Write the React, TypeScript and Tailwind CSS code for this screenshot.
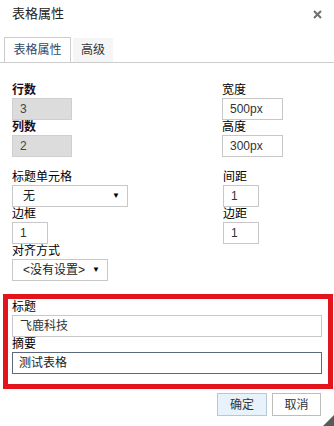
import React from 'react';

const font = { fontFamily: '"Liberation Sans", "Noto Sans CJK SC", sans-serif' };

function Label({ text, bold }: { text: string; bold?: boolean }) {
  return (
    <div className={`h-[15px] leading-[15px] text-[12px] ${bold ? 'font-bold text-[#1c0d24]' : 'text-black'}`}>
      {text}
    </div>
  );
}

function Box({ value, w, gray }: { value: string; w: string; gray?: boolean }) {
  return (
    <div
      className={`${w} h-[22px] border pl-[7px] flex items-center text-[12px] ${
        gray ? 'bg-[#dcdcdc] border-[#cfcfcf] text-[#444]' : 'bg-white border-[#c8c8c8] text-[#333]'
      }`}
    >
      {value}
    </div>
  );
}

function Select({ value, w }: { value: string; w: string }) {
  return (
    <div className={`${w} h-[22px] border border-[#c8c8c8] bg-white flex items-center justify-between pl-[10px] pr-[7px] text-[12px] text-[#222]`}>
      <span>{value}</span>
      <span className="text-[8px] text-black">▼</span>
    </div>
  );
}

export default function App() {
  return (
    <div className="relative w-[334px] h-[426px] bg-white overflow-hidden text-black" style={font}>
      {/* title bar */}
      <div className="h-[37px] flex items-start justify-between pl-3 pr-[12px] pt-[6px]">
        <span className="text-[13px] leading-[16px] text-[#222]">表格属性</span>
        <svg width="9" height="9" viewBox="0 0 9 9" className="mt-[4px]">
          <path d="M1 1 L8 8 M8 1 L1 8" stroke="#6f6f6f" strokeWidth="2" />
        </svg>
      </div>

      {/* tabs */}
      <div className="h-[26px] flex items-end border-b border-[#cccccc] pl-1">
        <div className="w-[67px] h-[25px] border border-b-0 border-[#cccccc] bg-white flex items-center justify-center text-[12px] text-[#2d4a68]">
          表格属性
        </div>
        <div className="ml-[2px] w-[40px] h-[24px] bg-[#f5f5f5] flex items-center justify-center text-[12px] text-[#333]">
          高级
        </div>
      </div>

      {/* general fields */}
      <div className="pt-5 pl-3">
        <div className="grid grid-cols-[210px_1fr]">
          <div>
            <Label text="行数" bold />
            <Box value="3" w="w-[60px]" gray />
            <Label text="列数" bold />
            <Box value="2" w="w-[60px]" gray />
          </div>
          <div>
            <Label text="宽度" />
            <Box value="500px" w="w-[61px]" />
            <Label text="高度" />
            <Box value="300px" w="w-[61px]" />
          </div>
        </div>

        <div className="mt-[13px] grid grid-cols-[211px_1fr]">
          <div>
            <Label text="标题单元格" />
            <Select value="无" w="w-[116px]" />
            <Label text="边框" />
            <Box value="1" w="w-[36px]" />
            <Label text="对齐方式" />
            <Select value="<没有设置>" w="w-[96px]" />
          </div>
          <div>
            <Label text="间距" />
            <Box value="1" w="w-[36px]" />
            <Label text="边距" />
            <Box value="1" w="w-[36px]" />
          </div>
        </div>
      </div>

      {/* highlighted caption / summary */}
      <div className="mt-[13px] ml-[3px] w-[330px] border-[5px] border-[#e2141c] pl-1 pt-[1px] pb-[10px]">
        <Label text="标题" />
        <Box value="飞鹿科技" w="w-[310px]" />
        <Label text="摘要" />
        <div className="w-[310px] h-[22px] border border-[#5b6b7c] pl-[6px] flex items-center text-[12px] text-[#222]">
          测试表格
        </div>
      </div>

      {/* buttons */}
      <div className="mt-[4px] flex justify-end gap-[5px] pr-[13px]">
        <button className="w-[50px] h-[23px] border border-[#b4c8d8] bg-[#e8f2fa] text-[12px] text-[#333]">确定</button>
        <button className="w-[49px] h-[23px] border border-[#bdbdbd] bg-white text-[12px] text-[#333]">取消</button>
      </div>

      {/* resize grip */}
      <svg width="11" height="11" viewBox="0 0 11 11" className="absolute right-0 bottom-0">
        <path d="M11 0 L11 11 L0 11 Z" fill="#5a5a5a" />
      </svg>
    </div>
  );
}
